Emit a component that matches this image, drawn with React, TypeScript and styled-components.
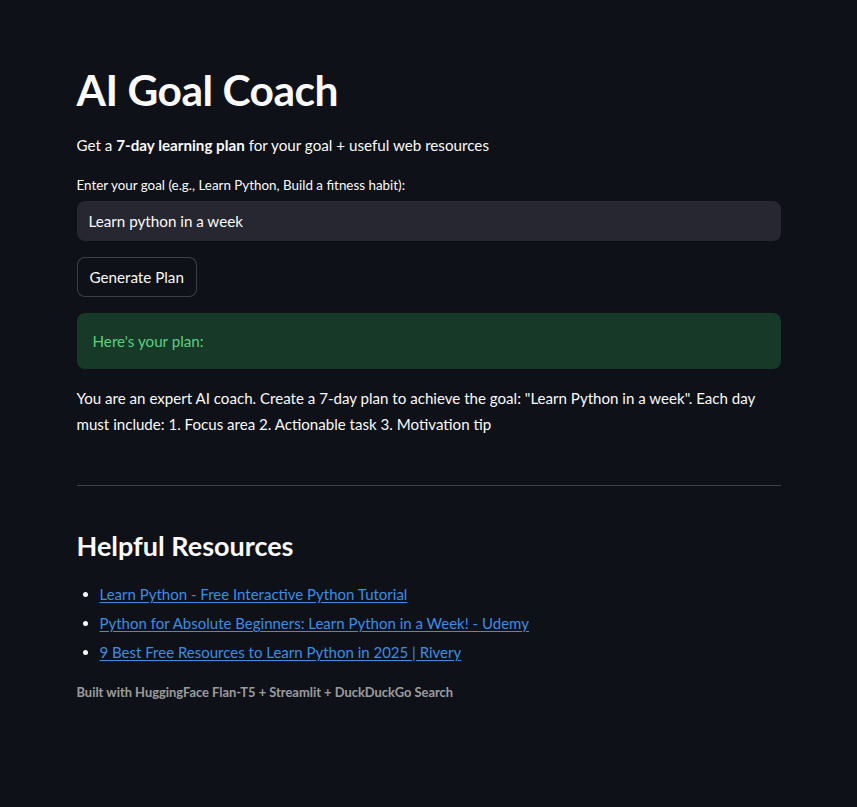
import React from "react";
import styled, { createGlobalStyle } from "styled-components";

const Global = createGlobalStyle`
  html, body { margin: 0; padding: 0; background: #0e1117; }
  body { font-family: Lato, "Noto Sans", sans-serif; color: #fafafa; }
  * { box-sizing: border-box; }
`;

const Page = styled.main`
  min-height: 807px;
  background: #0e1117;
  display: flex;
  justify-content: center;
`;

const Column = styled.div`
  width: 704px;
  padding-top: 63px;
  display: flex;
  flex-direction: column;
`;

const Title = styled.h1`
  margin: 0;
  font-size: 42.5px;
  line-height: 53px;
  font-weight: 700;
  letter-spacing: -0.5px;
`;

const Subtitle = styled.p`
  margin: 17px 0 0;
  font-size: 15.2px;
  line-height: 24px;
  b { font-weight: 700; }
`;

const Label = styled.label`
  margin-top: 18px;
  font-size: 13.4px;
  line-height: 20px;
`;

const Input = styled.input`
  margin-top: 6px;
  height: 40px;
  width: 100%;
  border: none;
  border-radius: 8px;
  background: #262730;
  color: #fafafa;
  font-family: inherit;
  font-size: 15.2px;
  padding: 0 12px;
  outline: none;
`;

const Button = styled.button`
  margin-top: 16px;
  align-self: flex-start;
  height: 40px;
  padding: 0 12px;
  border: 1px solid rgba(250, 250, 250, 0.2);
  border-radius: 8px;
  background: #0e1117;
  color: #fafafa;
  font-family: inherit;
  font-size: 15.2px;
`;

const Success = styled.div`
  margin-top: 16px;
  height: 56px;
  border-radius: 8px;
  background: #173928;
  color: #5ccf7d;
  font-size: 15.2px;
  display: flex;
  align-items: center;
  padding: 0 16px;
`;

const Body = styled.p`
  margin: 16px 0 0;
  font-size: 15.1px;
  line-height: 26px;
`;

const Divider = styled.hr`
  margin: 48px 0 0;
  border: none;
  border-top: 1px solid rgba(250, 250, 250, 0.2);
`;

const Heading = styled.h3`
  margin: 43px 0 0;
  font-size: 27px;
  line-height: 34px;
  font-weight: 700;
`;

const List = styled.ul`
  margin: 17px 0 0;
  padding-left: 23px;
  li { font-size: 15px; line-height: 29px; height: 29px; }
  li::marker { color: #fafafa; }
`;

const Link = styled.a`
  color: #3a8ee6;
  text-decoration: underline;
  text-underline-offset: 2px;
`;

const Footer = styled.p`
  margin: 15px 0 0;
  font-size: 12.9px;
  line-height: 20px;
  font-weight: 700;
  color: rgba(250, 250, 250, 0.6);
`;

const links = [
  "Learn Python - Free Interactive Python Tutorial",
  "Python for Absolute Beginners: Learn Python in a Week! - Udemy",
  "9 Best Free Resources to Learn Python in 2025 | Rivery",
];

export default function App() {
  return (
    <>
      <Global />
      <Page>
        <Column>
          <Title>AI Goal Coach</Title>
          <Subtitle>
            Get a <b>7-day learning plan</b> for your goal + useful web resources
          </Subtitle>
          <Label>Enter your goal (e.g., Learn Python, Build a fitness habit):</Label>
          <Input defaultValue="Learn python in a week" />
          <Button>Generate Plan</Button>
          <Success>Here's your plan:</Success>
          <Body>
            You are an expert AI coach. Create a 7-day plan to achieve the goal: "Learn Python in a week". Each day
            must include: 1. Focus area 2. Actionable task 3. Motivation tip
          </Body>
          <Divider />
          <Heading>Helpful Resources</Heading>
          <List>
            {links.map((l) => (
              <li key={l}>
                <Link href="#">{l}</Link>
              </li>
            ))}
          </List>
          <Footer>Built with HuggingFace Flan-T5 + Streamlit + DuckDuckGo Search</Footer>
        </Column>
      </Page>
    </>
  );
}
